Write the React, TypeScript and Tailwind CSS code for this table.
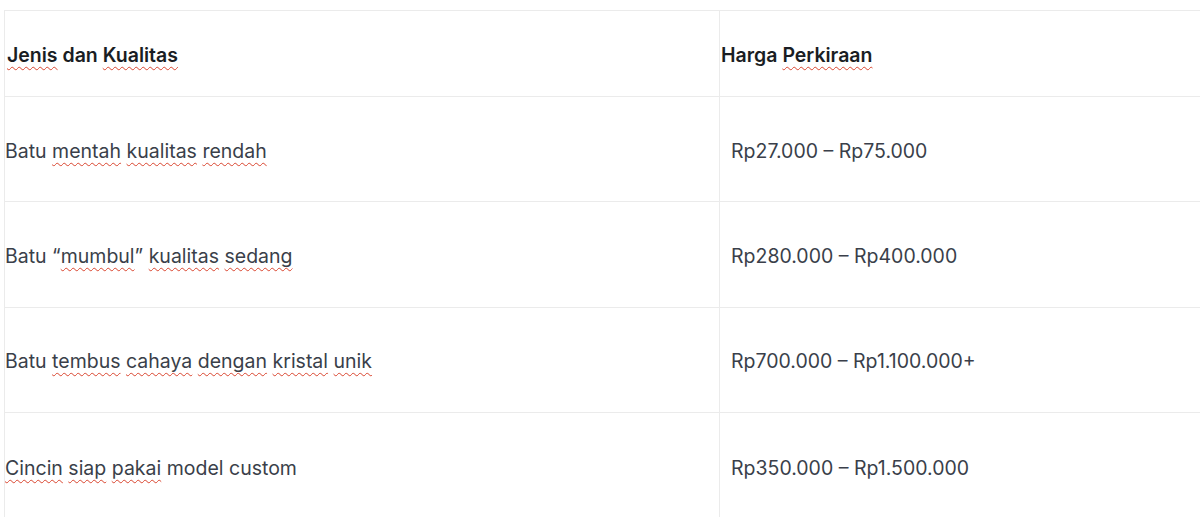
const rows: { name: string[]; price: string }[] = [
  { name: ["Batu", "~mentah", "~kualitas", "~rendah"], price: "Rp27.000 – Rp75.000" },
  { name: ["Batu", "“~mumbul”", "~kualitas", "~sedang"], price: "Rp280.000 – Rp400.000" },
  {
    name: ["Batu", "~tembus", "~cahaya", "~dengan", "~kristal", "~unik"],
    price: "Rp700.000 – Rp1.100.000+",
  },
  { name: ["~Cincin", "~siap", "~pakai", "model", "custom"], price: "Rp350.000 – Rp1.500.000" },
];

// words starting with ~ get the red spellcheck squiggle
const Word = ({ w }: { w: string }) => {
  if (w.startsWith("“~")) {
    const inner = w.slice(2, -1);
    return (
      <>
        “<span className="underline decoration-wavy decoration-[#d9452f] decoration-1 underline-offset-[4px]">{inner}</span>”
      </>
    );
  }
  if (w.startsWith("~")) {
    return (
      <span className="underline decoration-wavy decoration-[#d9452f] decoration-1 underline-offset-[4px]">
        {w.slice(1)}
      </span>
    );
  }
  return <>{w}</>;
};

const Words = ({ words }: { words: string[] }) => (
  <>
    {words.map((w, i) => (
      <span key={i}>
        {i > 0 && " "}
        <Word w={w} />
      </span>
    ))}
  </>
);

export default function App() {
  return (
    <div className="bg-white h-[517px] overflow-hidden pt-[10px] pl-[4px] font-['Inter',sans-serif]">
      <table className="w-[1220px] border-collapse table-fixed">
        <thead>
          <tr className="h-[86px] border-t border-[#ebebeb]">
            <th className="w-[715px] border-l border-r border-b border-[#ebebeb] pl-[2px] pt-[4px] text-left text-[19.5px] font-semibold text-[#1a1d23]">
              <Words words={["~Jenis", "dan", "~Kualitas"]} />
            </th>
            <th className="border-b border-[#ebebeb] pl-[1px] pt-[4px] text-left text-[19.5px] font-semibold text-[#1a1d23]">
              <Words words={["Harga", "~Perkiraan"]} />
            </th>
          </tr>
        </thead>
        <tbody>
          {rows.map((r, i) => (
            <tr key={r.price} className={i === 3 ? "h-[108px]" : "h-[105.4px]"}>
              <td className="border-l border-r border-b border-[#ebebeb] pl-0 pt-[4px] text-[19.5px] text-[#3a3f4a] last:pt-0">
                <Words words={r.name} />
              </td>
              <td className="border-b border-[#ebebeb] pl-[11px] pt-[4px] text-[19.5px] text-[#3a3f4a]">{r.price}</td>
            </tr>
          ))}
        </tbody>
      </table>
    </div>
  );
}
